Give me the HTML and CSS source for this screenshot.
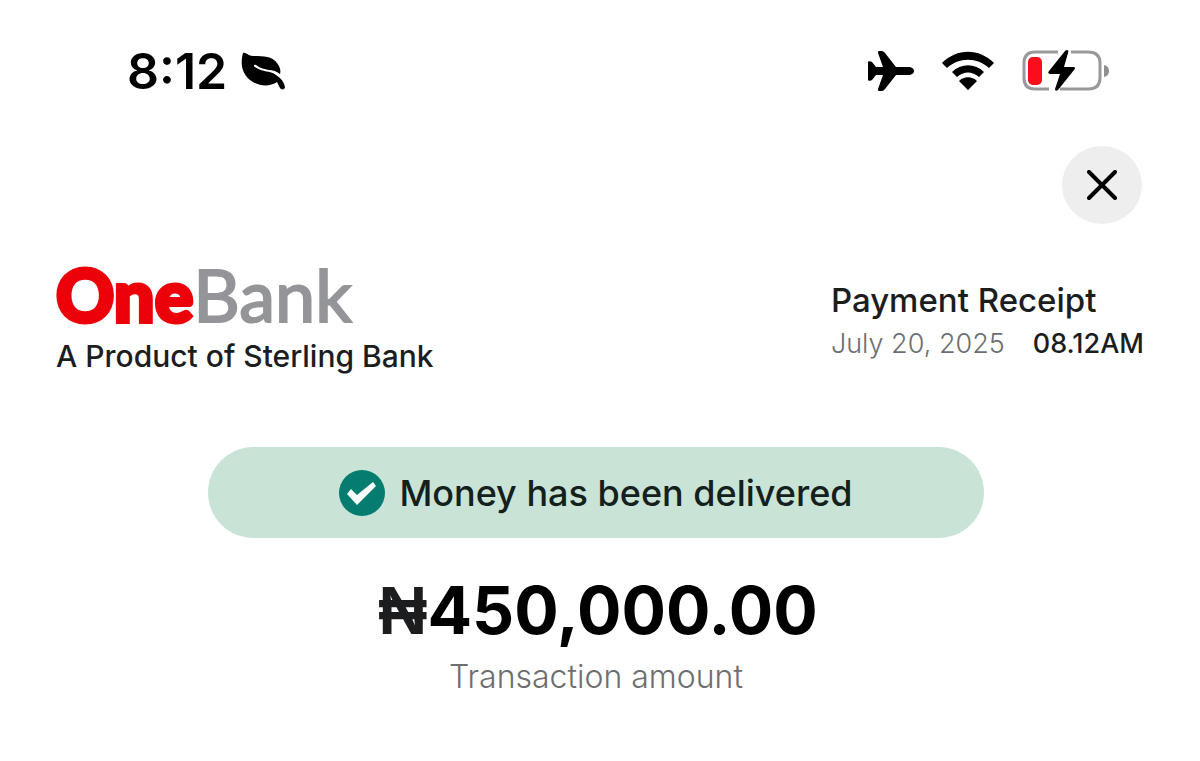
FILE: index.html
```html
<!DOCTYPE html>
<html lang="en">
<head>
<meta charset="utf-8">
<meta name="viewport" content="width=device-width, initial-scale=1">
<title>Payment Receipt</title>
<link rel="stylesheet" href="styles.css">
</head>
<body>
<div class="status-bar">
  <div class="clock">
    <span>8:12</span>
    <svg width="46" height="38" viewBox="0 0 46 38" aria-hidden="true">
      <path d="M2 1C5 0 7 4 12 4C22 4 31 4 36 11C39 15 40 18 39 22C32 16 24 20 15 13C13 12 12 14 14 15C22 21 29 18 35 23C40 26 43 30 44 35C44 38 40 38 39 36L36 30C29 35 18 35 9 28C-1 20 0 8 2 1Z"/>
    </svg>
  </div>
  <div class="indicators">
    <svg width="48" height="42" viewBox="0 0 48 42" aria-hidden="true">
      <path d="M12 1h3c1 0 2 1 3 2l11 14h12c4 0 6 2 6 4s-2 4-6 4H29L18 39c-1 1-2 2-3 2h-3c-1 0-1-1-1-2l5-14H9l-4 5c-1 1-4 1-4 0V12c0-1 3-1 4 0l4 5h7L11 3c0-1 0-2 1-2Z"/>
    </svg>
    <svg width="54" height="40" viewBox="0 0 54 40" aria-hidden="true">
      <path d="M1 12C16-3 38-3 53 12L48 17C36 6 18 6 6 17ZM11 21C20 12 34 12 43 21L38 26C31 20 23 20 16 26ZM18 30C23 25 31 25 36 30L27 39Z"/>
    </svg>
    <svg width="88" height="44" viewBox="0 0 88 44" aria-hidden="true">
      <path class="battery-shell" d="M37 3H14Q3 3 3 14V29Q3 40 14 40H28M50 3H67Q79 3 79 14V29Q79 40 67 40H39"/>
      <rect class="battery-level" x="7" y="8" width="14" height="28" rx="5"/>
      <path class="battery-cap" d="M83 16q5 1 5 6t-5 6Z"/>
      <path d="M46 1Q48 1 47 4L43 18H53Q55 19 53 21L37 41Q34 43 34 40L39 25H29Q26 24 28 22L44 2Q45 1 46 1Z"/>
    </svg>
  </div>
</div>

<main class="receipt">
  <button class="close" type="button" aria-label="Close">
    <svg width="30" height="30" viewBox="0 0 30 30" aria-hidden="true"><path d="M2 2 28 28M28 2 2 28"/></svg>
  </button>

  <header class="heading">
    <div class="brand">
      <div class="logo"><span class="logo-one">One</span><span class="logo-bank">Bank</span></div>
      <p class="tagline">A Product of Sterling Bank</p>
    </div>
    <div class="details">
      <h1 class="title">Payment Receipt</h1>
      <p class="when"><span class="date">July 20, 2025</span><span class="time">08.12AM</span></p>
    </div>
  </header>

  <div class="banner">
    <svg width="46" height="46" viewBox="0 0 46 46" aria-hidden="true">
      <circle cx="23" cy="23" r="23"/>
      <path d="M8 24L12 19L18 25L34 12L37 16L18 35Z"/>
    </svg>
    <span>Money has been delivered</span>
  </div>

  <section class="summary">
    <p class="amount"><span class="currency">₦</span><span>450,000.00</span></p>
    <p class="caption">Transaction amount</p>
  </section>
</main>
</body>
</html>
```
FILE: styles.css
```css
* {
  box-sizing: border-box;
}

body {
  margin: 0;
  padding: 44px 56px 64px;
  background: #fff;
  color: #1c1d1f;
  font-family: Inter, "Liberation Sans", sans-serif;
}

p,
h1 {
  margin: 0;
}

.status-bar {
  display: flex;
  align-items: center;
  justify-content: space-between;
  padding: 0 35px 0 71px;
  color: #000;
}

.clock {
  display: flex;
  align-items: center;
  gap: 14px;
  font-size: 50px;
  font-weight: 600;
  line-height: 54px;
}

.indicators {
  display: flex;
  align-items: center;
  gap: 26px;
}

.battery-shell {
  fill: none;
  stroke: #98999b;
  stroke-width: 3;
}

.battery-level {
  fill: #fb0d1b;
}

.battery-cap {
  fill: #8f9092;
}

.receipt {
  display: flex;
  flex-direction: column;
  padding-top: 48px;
}

.close {
  display: grid;
  place-items: center;
  align-self: flex-end;
  width: 80px;
  height: 78px;
  margin-right: 2px;
  border: 0;
  border-radius: 50%;
  background: #eee;
}

.close path {
  fill: none;
  stroke: #000;
  stroke-width: 4;
  stroke-linecap: round;
}

.heading {
  display: flex;
  align-items: flex-end;
  justify-content: space-between;
  margin-top: 30px;
}

.logo {
  font-family: Lato, sans-serif;
  font-size: 72px;
  line-height: 80px;
}

.logo-one {
  color: #ec0009;
  font-weight: 900;
  -webkit-text-stroke: 4px #ec0009;
}

.logo-bank {
  color: #949599;
  -webkit-text-stroke: 2px #949599;
}

.tagline {
  font-size: 30px;
  font-weight: 500;
  line-height: 44px;
}

.details {
  padding-bottom: 12px;
}

.title {
  font-size: 33px;
  font-weight: 500;
  line-height: 44px;
}

.when {
  display: flex;
  gap: 28px;
  font-size: 27px;
  line-height: 44px;
}

.date {
  color: #6d6e70;
  font-weight: 300;
}

.time {
  font-weight: 500;
}

.banner {
  display: flex;
  align-items: center;
  justify-content: center;
  gap: 14px;
  width: 776px;
  max-width: 100%;
  min-height: 91px;
  margin: 69px 8px 0 0;
  align-self: center;
  border-radius: 46px;
  background: #c9e4d7;
  color: #14201c;
  font-size: 36px;
  font-weight: 500;
}

.banner circle {
  fill: #047c70;
}

.banner path {
  fill: #fff;
}

.summary {
  margin-top: 32px;
  text-align: center;
}

.amount {
  display: flex;
  align-items: center;
  justify-content: center;
  margin-right: 4px;
  color: #000;
  font-size: 66px;
  font-weight: 700;
  line-height: 80px;
}

.currency {
  color: #1c1d1f;
  font-family: "Liberation Sans", sans-serif;
  font-size: 68px;
}

.caption {
  margin: 7px 8px 0 0;
  color: #6d6e70;
  font-size: 32px;
  font-weight: 300;
  line-height: 40px;
}
```
